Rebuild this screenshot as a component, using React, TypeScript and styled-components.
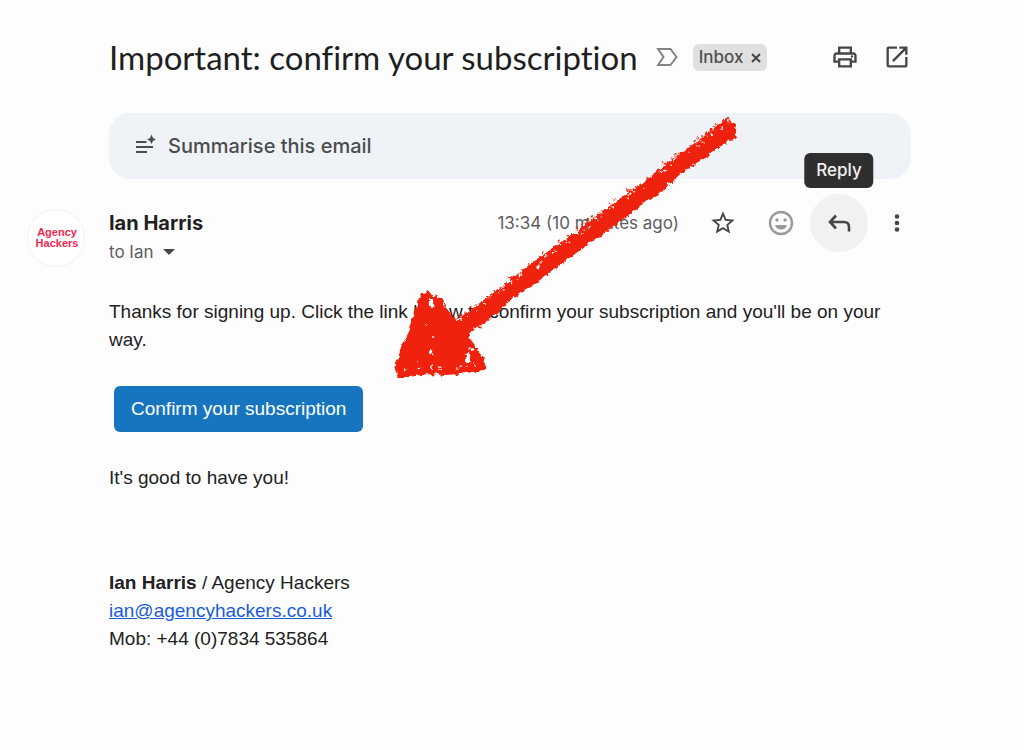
import React from 'react';
import styled, { createGlobalStyle } from 'styled-components';

const ui = `Inter, "Liberation Sans", sans-serif`;
const body = `"Liberation Sans", Arial, sans-serif`;

const GlobalStyle = createGlobalStyle`
  *, *::before, *::after { box-sizing: border-box; }
  body { margin: 0; background: #fdfdfe; color: #202124; font-family: ${body}; }
  button { font: inherit; color: inherit; border: 0; padding: 0; background: none; cursor: pointer; }
`;

const Page = styled.main`
  position: relative;
  display: grid;
  grid-template-columns: 58px minmax(0, 1fr);
  column-gap: 24px;
  padding: 37px 113px 96px 27px;
`;

const SubjectBar = styled.header`
  grid-column: 2;
  display: flex;
  align-items: center;
  height: 40px;
`;

const Subject = styled.h1`
  margin: 0 18px 0 0;
  font: 400 33px/38px Lato, sans-serif;
  font-variant-ligatures: none;
  color: #1f1f1f;
`;

const Label = styled.span`
  display: flex;
  align-items: center;
  gap: 8px;
  height: 27px;
  margin-left: 14px;
  padding: 0 6px;
  border-radius: 6px;
  background: #e0e0e0;
  color: #505050;
  font: 500 17px/26px ${ui};
`;

const IconButton = styled.button<{ $size: number; $filled?: boolean }>`
  position: relative;
  display: flex;
  align-items: center;
  justify-content: center;
  flex: none;
  width: ${p => p.$size}px;
  height: ${p => p.$size}px;
  border-radius: 50%;
  color: #444746;
  background: ${p => (p.$filled ? '#f1f1f1' : 'none')};
`;

const HeaderTools = styled.div`
  display: flex;
  gap: 24px;
  margin-left: auto;
`;

const SummaryButton = styled.button`
  && {
    grid-column: 2;
    display: flex;
    align-items: center;
    gap: 10px;
    height: 66px;
    margin-top: 36px;
    padding: 0 24px;
    border-radius: 21px;
    background: #eff3f8;
    color: #4b4d4c;
    font: 500 20px/28px ${ui};
  }
`;

const Avatar = styled.div`
  grid-column: 1;
  display: flex;
  flex-direction: column;
  align-items: center;
  justify-content: center;
  width: 58px;
  height: 58px;
  margin-top: 30px;
  padding-left: 2px;
  border: 1px solid #eff2f6;
  border-radius: 50%;
  background: #fff;
  color: #f5274e;
  font: 700 11px/11px ${body};
`;

const Message = styled.article`
  grid-column: 2;
  margin-top: 15px;
`;

const SenderBar = styled.div`
  display: flex;
  align-items: flex-start;
  justify-content: space-between;
  height: 72px;
`;

const Sender = styled.div`
  padding-top: 14px;
`;

const SenderName = styled.h2`
  margin: 0;
  font: 700 20px/30px ${ui};
  color: #1f1f1f;
`;

const Recipient = styled.button`
  && {
    display: flex;
    align-items: center;
    gap: 9px;
    color: #5e5e5e;
    font: 400 17px/28px ${ui};
  }
`;

const SenderTools = styled.div`
  display: flex;
  align-items: center;
  margin-right: -15px;
`;

const Time = styled.time`
  margin-right: 15px;
  color: #5e5e5e;
  font: 400 17px/28px ${ui};
`;

const Tooltip = styled.span`
  position: absolute;
  bottom: 100%;
  left: 50%;
  margin-bottom: 6px;
  transform: translateX(-50%);
  padding: 4px 12px 5px;
  border-radius: 6px;
  background: #2f2f2f;
  color: #f2f2f2;
  font: 500 17px/26px ${ui};
`;

const Text = styled.p`
  margin: 0;
  font-size: 19px;
  line-height: 28px;
  color: #222;
`;

const MessageBody = styled.div`
  display: flex;
  flex-direction: column;
  align-items: flex-start;
  gap: 32px;
  padding-top: 32px;
`;

const ConfirmButton = styled.button`
  && {
    height: 46px;
    margin-left: 5px;
    padding: 0 17px;
    border-radius: 6px;
    background: #1675be;
    color: #fff;
    font: 400 19px/28px ${body};
  }
`;

const Signature = styled.footer`
  margin-top: 45px;
`;

const MailLink = styled.a`
  color: #1a5cdb;
  text-decoration: underline;
`;

const ArrowOverlay = styled.svg`
  position: absolute;
  left: 390px;
  top: 110px;
  width: 355px;
  height: 275px;
  pointer-events: none;
`;

const icon = (size: number) => ({ width: size, height: size, viewBox: '0 0 24 24', fill: 'currentColor', 'aria-hidden': true });

const ImportanceMarker = () => (
  <svg width="23" height="20" viewBox="0 0 23 20" fill="none" stroke="#858585" strokeWidth="2" aria-hidden>
    <path d="M2 2H14.5L20.5 10L14.5 18H2L7.5 10Z" />
  </svg>
);

const CloseIcon = () => (
  <svg width="10" height="10" viewBox="0 0 10 10" stroke="#444" strokeWidth="2" aria-hidden>
    <path d="M1 1L9 9M9 1L1 9" />
  </svg>
);

const PrintIcon = () => (
  <svg {...icon(28)}>
    <path d="M19 8h-1V3H6v5H5c-1.66 0-3 1.34-3 3v6h4v4h12v-4h4v-6c0-1.66-1.34-3-3-3zM8 5h8v3H8V5zm8 12v2H8v-4h8v2zm2-2v-2H6v2H4v-4c0-.55.45-1 1-1h14c.55 0 1 .45 1 1v4h-2z" />
    <circle cx="18" cy="11.5" r="1" />
  </svg>
);

const OpenIcon = () => (
  <svg {...icon(28)}>
    <path d="M19 19H5V5h7V3H5a2 2 0 0 0-2 2v14a2 2 0 0 0 2 2h14c1.1 0 2-.9 2-2v-7h-2v7zM14 3v2h3.59l-9.83 9.83 1.41 1.41L19 6.41V10h2V3h-7z" />
  </svg>
);

const SummariseIcon = () => (
  <svg width="25" height="24" viewBox="0 0 25 24" fill="none" stroke="currentColor" strokeWidth="2" aria-hidden>
    <path d="M3 8H13.500M3 13H20M3 18H14" />
    <path d="M18.500 0.500L20 4L23 5.500L20 7L18.500 10L17 7L14 5.500L17 4Z" fill="currentColor" stroke="none" />
  </svg>
);

const StarIcon = () => (
  <svg {...icon(28)}>
    <path d="M22 9.240l-7.190-.62L12 2 9.190 8.630 2 9.240l5.460 4.730L5.820 21 12 17.270 18.180 21l-1.630-7.030L22 9.240zM12 15.400l-3.760 2.270 1-4.280-3.320-2.880 4.380-.38L12 6.100l1.710 4.040 4.380.38-3.320 2.880 1 4.280L12 15.400z" />
  </svg>
);

const SmileIcon = () => (
  <svg width="26" height="26" viewBox="0 0 26 26" fill="#9a9a9a" aria-hidden>
    <circle cx="13" cy="13" r="11" fill="none" stroke="#9a9a9a" strokeWidth="2.4" />
    <circle cx="9" cy="10" r="1.7" />
    <circle cx="17" cy="10" r="1.7" />
    <path d="M7 15H19C18.300 18 15.900 19.500 13 19.500S7.700 18 7 15Z" />
  </svg>
);

const ReplyIcon = () => (
  <svg width="26" height="22" viewBox="0 0 26 22" fill="none" stroke="currentColor" strokeWidth="2.6" aria-hidden>
    <path d="M10 3.500L4 10L10 16.500M4 10H18C21.500 10 23 12 23 15V19.500" />
  </svg>
);

const MoreIcon = () => (
  <svg width="6" height="20" viewBox="0 0 6 20" fill="currentColor" aria-hidden>
    <circle cx="3" cy="3.5" r="2.3" />
    <circle cx="3" cy="10" r="2.3" />
    <circle cx="3" cy="16.5" r="2.3" />
  </svg>
);

const CaretIcon = () => (
  <svg width="12" height="6" viewBox="0 0 12 6" fill="#444746" aria-hidden>
    <path d="M0 0H12L6 6Z" />
  </svg>
);

type Point = [number, number];

/* Upper edge of the brush stroke, from its tail down to the arrow head. */
const upperEdge: Point[] = [
  [727, 119], [712, 131], [703, 138], [690, 149], [672, 160], [647, 180],
  [628, 194], [610, 207], [594, 219], [577, 233], [553, 249], [527, 268], [507, 284], [480, 304], [457, 321],
];

const lowerEdge: Point[] = [
  [472, 330], [487, 320], [513, 297], [537, 281], [560, 264], [580, 249], [594, 238], [602, 234],
  [622, 219], [637, 207], [660, 191], [680, 173], [707, 155], [722, 144], [734, 137], [736, 125],
];

const head: Point[] = [
  [457, 321], [447, 311], [440, 299], [428, 293], [421, 296], [415, 312], [410, 333], [402, 348],
  [396, 369], [398, 376], [409, 376], [428, 373], [447, 374], [466, 372], [484, 369], [485, 363],
  [476, 348], [467, 337],
];

/* Small fixed-seed generator, so that the bristle marks are the same on each paint. */
const seeded = (seed: number) => () => {
  seed = (seed * 16807) % 2147483647;
  return seed / 2147483647;
};

const scatter = (edge: Point[], perSegment: number, reach: number, shift: Point, seed: number) => {
  const rnd = seeded(seed);
  return edge.slice(1).flatMap(([x2, y2], i) => {
    const [x1, y1] = edge[i];
    return Array.from({ length: perSegment }, () => {
      const t = rnd();
      const d = rnd() * reach;
      return {
        x: x1 + (x2 - x1) * t + shift[0] * d,
        y: y1 + (y2 - y1) * t + shift[1] * d,
        rx: 0.5 + rnd() * 0.9,
        ry: 0.5 + rnd() * 0.7,
      };
    });
  });
};

const specks = [
  ...scatter(upperEdge, 6, 4, [-0.6, -0.8], 71),
  ...scatter(lowerEdge, 3, 2, [0.6, 0.8], 913),
];

const gaps = [
  ...scatter(upperEdge, 4, 4, [0.6, 0.8], 337),
  ...scatter([[404, 371], [430, 370], [455, 370], [480, 367]], 4, 3, [0, -1], 17),
  { x: 431, y: 303, rx: 2.2, ry: 5 },
  { x: 468, y: 357, rx: 2.2, ry: 5 },
  { x: 432, y: 352, rx: 2, ry: 3 },
  { x: 433, y: 337, rx: 1.2, ry: 1.8 },
  { x: 418, y: 361, rx: 1, ry: 1 },
  { x: 427, y: 325, rx: 1, ry: 1 },
  { x: 472, y: 349, rx: 2.6, ry: 1.8 },
  { x: 538, y: 266, rx: 1.6, ry: 2.6 },
  { x: 520, y: 275, rx: 1.6, ry: 1.6 },
];

const BrushArrow = () => (
  <ArrowOverlay viewBox="390 110 355 275" aria-hidden>
    <defs>
      <filter id="bristle" x="-5%" y="-5%" width="110%" height="110%">
        <feTurbulence type="fractalNoise" baseFrequency="0.2" numOctaves="2" seed="4" result="grain" />
        <feDisplacementMap in="SourceGraphic" in2="grain" scale="6" xChannelSelector="R" yChannelSelector="G" />
      </filter>
      <mask id="gaps" maskUnits="userSpaceOnUse" x="390" y="110" width="355" height="275">
        <rect x="390" y="110" width="355" height="275" fill="#fff" />
        {gaps.map((g, i) => <ellipse key={i} cx={g.x} cy={g.y} rx={g.rx} ry={g.ry} fill="#000" />)}
      </mask>
    </defs>
    <g filter="url(#bristle)" fill="#ee220c">
      <g mask="url(#gaps)">
        <polygon
          points={[...upperEdge, ...head.slice(1), ...lowerEdge].map(p => p.join(',')).join(' ')}
          stroke="#ee220c"
          strokeWidth="2"
          strokeLinejoin="round"
        />
      </g>
      {specks.map((s, i) => <ellipse key={i} cx={s.x} cy={s.y} rx={s.rx} ry={s.ry} />)}
    </g>
  </ArrowOverlay>
);

export default function App() {
  return (
    <>
      <GlobalStyle />
      <Page>
        <SubjectBar>
          <Subject>Important: confirm your subscription</Subject>
          <ImportanceMarker />
          <Label>
            Inbox
            <button aria-label="Remove label Inbox"><CloseIcon /></button>
          </Label>
          <HeaderTools>
            <IconButton $size={28} aria-label="Print"><PrintIcon /></IconButton>
            <IconButton $size={28} aria-label="Open in new window"><OpenIcon /></IconButton>
          </HeaderTools>
        </SubjectBar>

        <SummaryButton><SummariseIcon />Summarise this email</SummaryButton>

        <Avatar><span>Agency</span><span>Hackers</span></Avatar>

        <Message>
          <SenderBar>
            <Sender>
              <SenderName>Ian Harris</SenderName>
              <Recipient>to Ian <CaretIcon /></Recipient>
            </Sender>
            <SenderTools>
              <Time>13:34 (10 minutes ago)</Time>
              <IconButton $size={58} aria-label="Star"><StarIcon /></IconButton>
              <IconButton $size={58} aria-label="Add reaction"><SmileIcon /></IconButton>
              <IconButton $size={58} $filled>
                <ReplyIcon />
                <Tooltip>Reply</Tooltip>
              </IconButton>
              <IconButton $size={58} aria-label="More"><MoreIcon /></IconButton>
            </SenderTools>
          </SenderBar>

          <MessageBody>
            <Text>
              Thanks for signing up. Click the link below to confirm your subscription and you'll be on your way.
            </Text>
            <ConfirmButton>Confirm your subscription</ConfirmButton>
            <Text>It's good to have you!</Text>
            <Signature>
              <Text><strong>Ian Harris</strong> / Agency Hackers</Text>
              <Text><MailLink href="mailto:ian@agencyhackers.co.uk">ian@agencyhackers.co.uk</MailLink></Text>
              <Text>Mob: +44 (0)7834 535864</Text>
            </Signature>
          </MessageBody>
        </Message>
        <BrushArrow />
      </Page>
    </>
  );
}
